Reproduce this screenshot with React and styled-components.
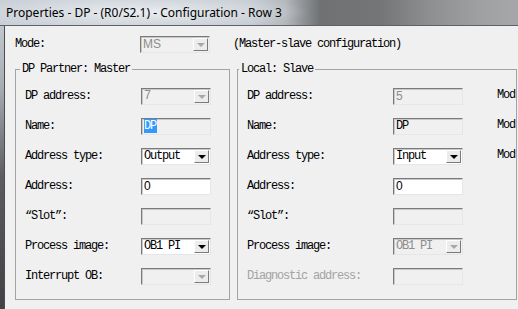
import React from "react";
import styled, { createGlobalStyle } from "styled-components";

const GlobalStyle = createGlobalStyle`
  html, body { margin: 0; padding: 0; background: #f0f0f0; }
  body { width: 518px; height: 309px; overflow: hidden; }
`;

const mono = `"Liberation Mono", "DejaVu Sans Mono", monospace`;

const Window = styled.div`
  width: 518px;
  height: 309px;
  display: flex;
  flex-direction: column;
  overflow: hidden;
`;

const TitleBar = styled.div`
  height: 26px;
  flex: none;
  display: flex;
  align-items: center;
  padding-left: 6px;
  box-sizing: border-box;
  border-bottom: 1px solid #5e6266;
  font-family: "Noto Sans", "Open Sans", sans-serif;
  font-size: 12px;
  color: #000;
  background:
    radial-gradient(ellipse 170px 18px at 140px 12px, rgba(235, 238, 241, 0.95), rgba(235, 238, 241, 0) 100%),
    linear-gradient(90deg, #c9d0d7 0px, #c4cbd2 250px, #b5b9bd 285px, #6f7173 320px, #747576 380px, #8e8f90 430px, #9fa0a1 480px, #a6a7a8 518px);
`;

const Frame = styled.div`
  flex: 1;
  display: flex;
  min-height: 0;
`;

const SideFrame = styled.div`
  width: 4px;
  flex: none;
  border-right: 1px solid #4a4d50;
  background: linear-gradient(180deg, #c1c7cd 0px, #a9aeb3 60px, #5b5d60 150px, #3b3c3e 309px);
`;

const Body = styled.div`
  flex: 1;
  min-width: 0;
  background: #f0f0f0;
  padding: 9px 0 0 10px;
  font-family: ${mono};
  font-size: 12px;
  letter-spacing: -1.2px;
  color: #000;
`;

const ModeRow = styled.div`
  display: grid;
  grid-template-columns: 125px 70px auto;
  align-items: center;
  height: 18px;
`;

const Groups = styled.div`
  display: flex;
  gap: 7px;
  margin-top: 10px;
`;

const Group = styled.fieldset`
  margin: 0;
  width: ${(p) => p.$width}px;
  flex: none;
  box-sizing: border-box;
  border: 1px solid #a3a3a3;
  padding: 6px 0 ${(p) => p.$bottom}px 9px;
  min-width: 0;
`;

const Legend = styled.legend`
  padding: 0 2px;
  margin-left: ${(p) => p.$shift}px;
  line-height: 12px;
  font-size: 12px;
`;

const Row = styled.div`
  display: grid;
  grid-template-columns: ${(p) => p.$label}px 70px auto;
  align-items: center;
  height: 30px;
`;

const Label = styled.span`
  white-space: nowrap;
  color: ${(p) => (p.$disabled ? "#a3a3a3" : "#000")};
`;

const Description = styled.span`
  white-space: nowrap;
  margin-left: 23px;
`;

const Note = styled.span`
  white-space: nowrap;
  margin: -3px 0 0 34px;
`;

const Field = styled.div`
  height: 17px;
  box-sizing: border-box;
  border: 1px solid;
  border-color: #7a7a7a #e6e6e6 #e6e6e6 #7a7a7a;
  box-shadow: inset 1px 1px 0 #c8c8c8;
  background: ${(p) => (p.$disabled ? "#f0f0f0" : "#fff")};
  display: flex;
  align-items: center;
  padding-left: 2px;
  overflow: hidden;
  white-space: nowrap;
`;

const Value = styled.span`
  flex: 1;
  font-family: ${(p) => (p.$sans ? `"Liberation Sans", Arial, sans-serif` : mono)};
  font-size: 12px;
  letter-spacing: ${(p) => (p.$sans ? "0" : "-1.2px")};
  color: ${(p) => (p.$disabled ? "#8d8d8d" : "#000")};
`;

const Selected = styled.span`
  background: #3399ff;
  color: #fff;
  padding: 0 1px 0 0;
  line-height: 12px;
`;

const ArrowButton = styled.div`
  width: 15px;
  height: 13px;
  flex: none;
  margin-right: 1px;
  box-sizing: border-box;
  border: 1px solid;
  border-color: #ffffff #7a7a7a #7a7a7a #ffffff;
  background: #ececec;
  display: flex;
  align-items: center;
  justify-content: center;
  &::after {
    content: "";
    border-left: 4px solid transparent;
    border-right: 4px solid transparent;
    border-top: 4px solid ${(p) => (p.$disabled ? "#a8a8a8" : "#000")};
    margin-top: 1px;
  }
`;

function TextBox({ value, disabled, sans, children }) {
  return (
    <Field $disabled={disabled}>
      {children || (
        <Value $sans={sans} $disabled={disabled && sans}>
          {value}
        </Value>
      )}
    </Field>
  );
}

function Combo({ value, disabled, sans }) {
  return (
    <Field $disabled={disabled}>
      <Value $sans={sans} $disabled={disabled}>
        {value}
      </Value>
      <ArrowButton $disabled={disabled} />
    </Field>
  );
}

export default function App() {
  return (
    <>
      <GlobalStyle />
      <Window>
        <TitleBar>Properties - DP - (R0/S2.1) - Configuration - Row 3</TitleBar>
        <Frame>
          <SideFrame />
          <Body>
            <ModeRow>
              <Label>Mode:</Label>
              <Combo value="MS" sans disabled />
              <Description>(Master-slave configuration)</Description>
            </ModeRow>
            <Groups>
              <Group $width={215} $bottom={5}>
                <Legend $shift={-5}>DP Partner: Master</Legend>
                <Row $label={116}>
                  <Label>DP address:</Label>
                  <Combo value="7" disabled />
                </Row>
                <Row $label={116}>
                  <Label>Name:</Label>
                  <TextBox disabled>
                    <Value>
                      <Selected>DP</Selected>
                    </Value>
                  </TextBox>
                </Row>
                <Row $label={116}>
                  <Label>Address type:</Label>
                  <Combo value="Output" />
                </Row>
                <Row $label={116}>
                  <Label>Address:</Label>
                  <TextBox value="0" sans />
                </Row>
                <Row $label={116}>
                  <Label>“Slot”:</Label>
                  <TextBox disabled />
                </Row>
                <Row $label={116}>
                  <Label>Process image:</Label>
                  <Combo value="OB1 PI" />
                </Row>
                <Row $label={116}>
                  <Label>Interrupt OB:</Label>
                  <Combo value="" disabled />
                </Row>
              </Group>
              <Group $width={280} $bottom={8}>
                <Legend $shift={-8}>Local: Slave</Legend>
                <Row $label={146}>
                  <Label>DP address:</Label>
                  <TextBox value="5" sans disabled />
                  <Note>Mod</Note>
                </Row>
                <Row $label={146}>
                  <Label>Name:</Label>
                  <TextBox value="DP" disabled />
                  <Note>Mod</Note>
                </Row>
                <Row $label={146}>
                  <Label>Address type:</Label>
                  <Combo value="Input" />
                  <Note>Mod</Note>
                </Row>
                <Row $label={146}>
                  <Label>Address:</Label>
                  <TextBox value="0" sans />
                </Row>
                <Row $label={146}>
                  <Label>“Slot”:</Label>
                  <TextBox disabled />
                </Row>
                <Row $label={146}>
                  <Label>Process image:</Label>
                  <Combo value="OB1 PI" disabled />
                </Row>
                <Row $label={146}>
                  <Label $disabled>Diagnostic address:</Label>
                  <TextBox disabled />
                </Row>
              </Group>
            </Groups>
          </Body>
        </Frame>
      </Window>
    </>
  );
}
